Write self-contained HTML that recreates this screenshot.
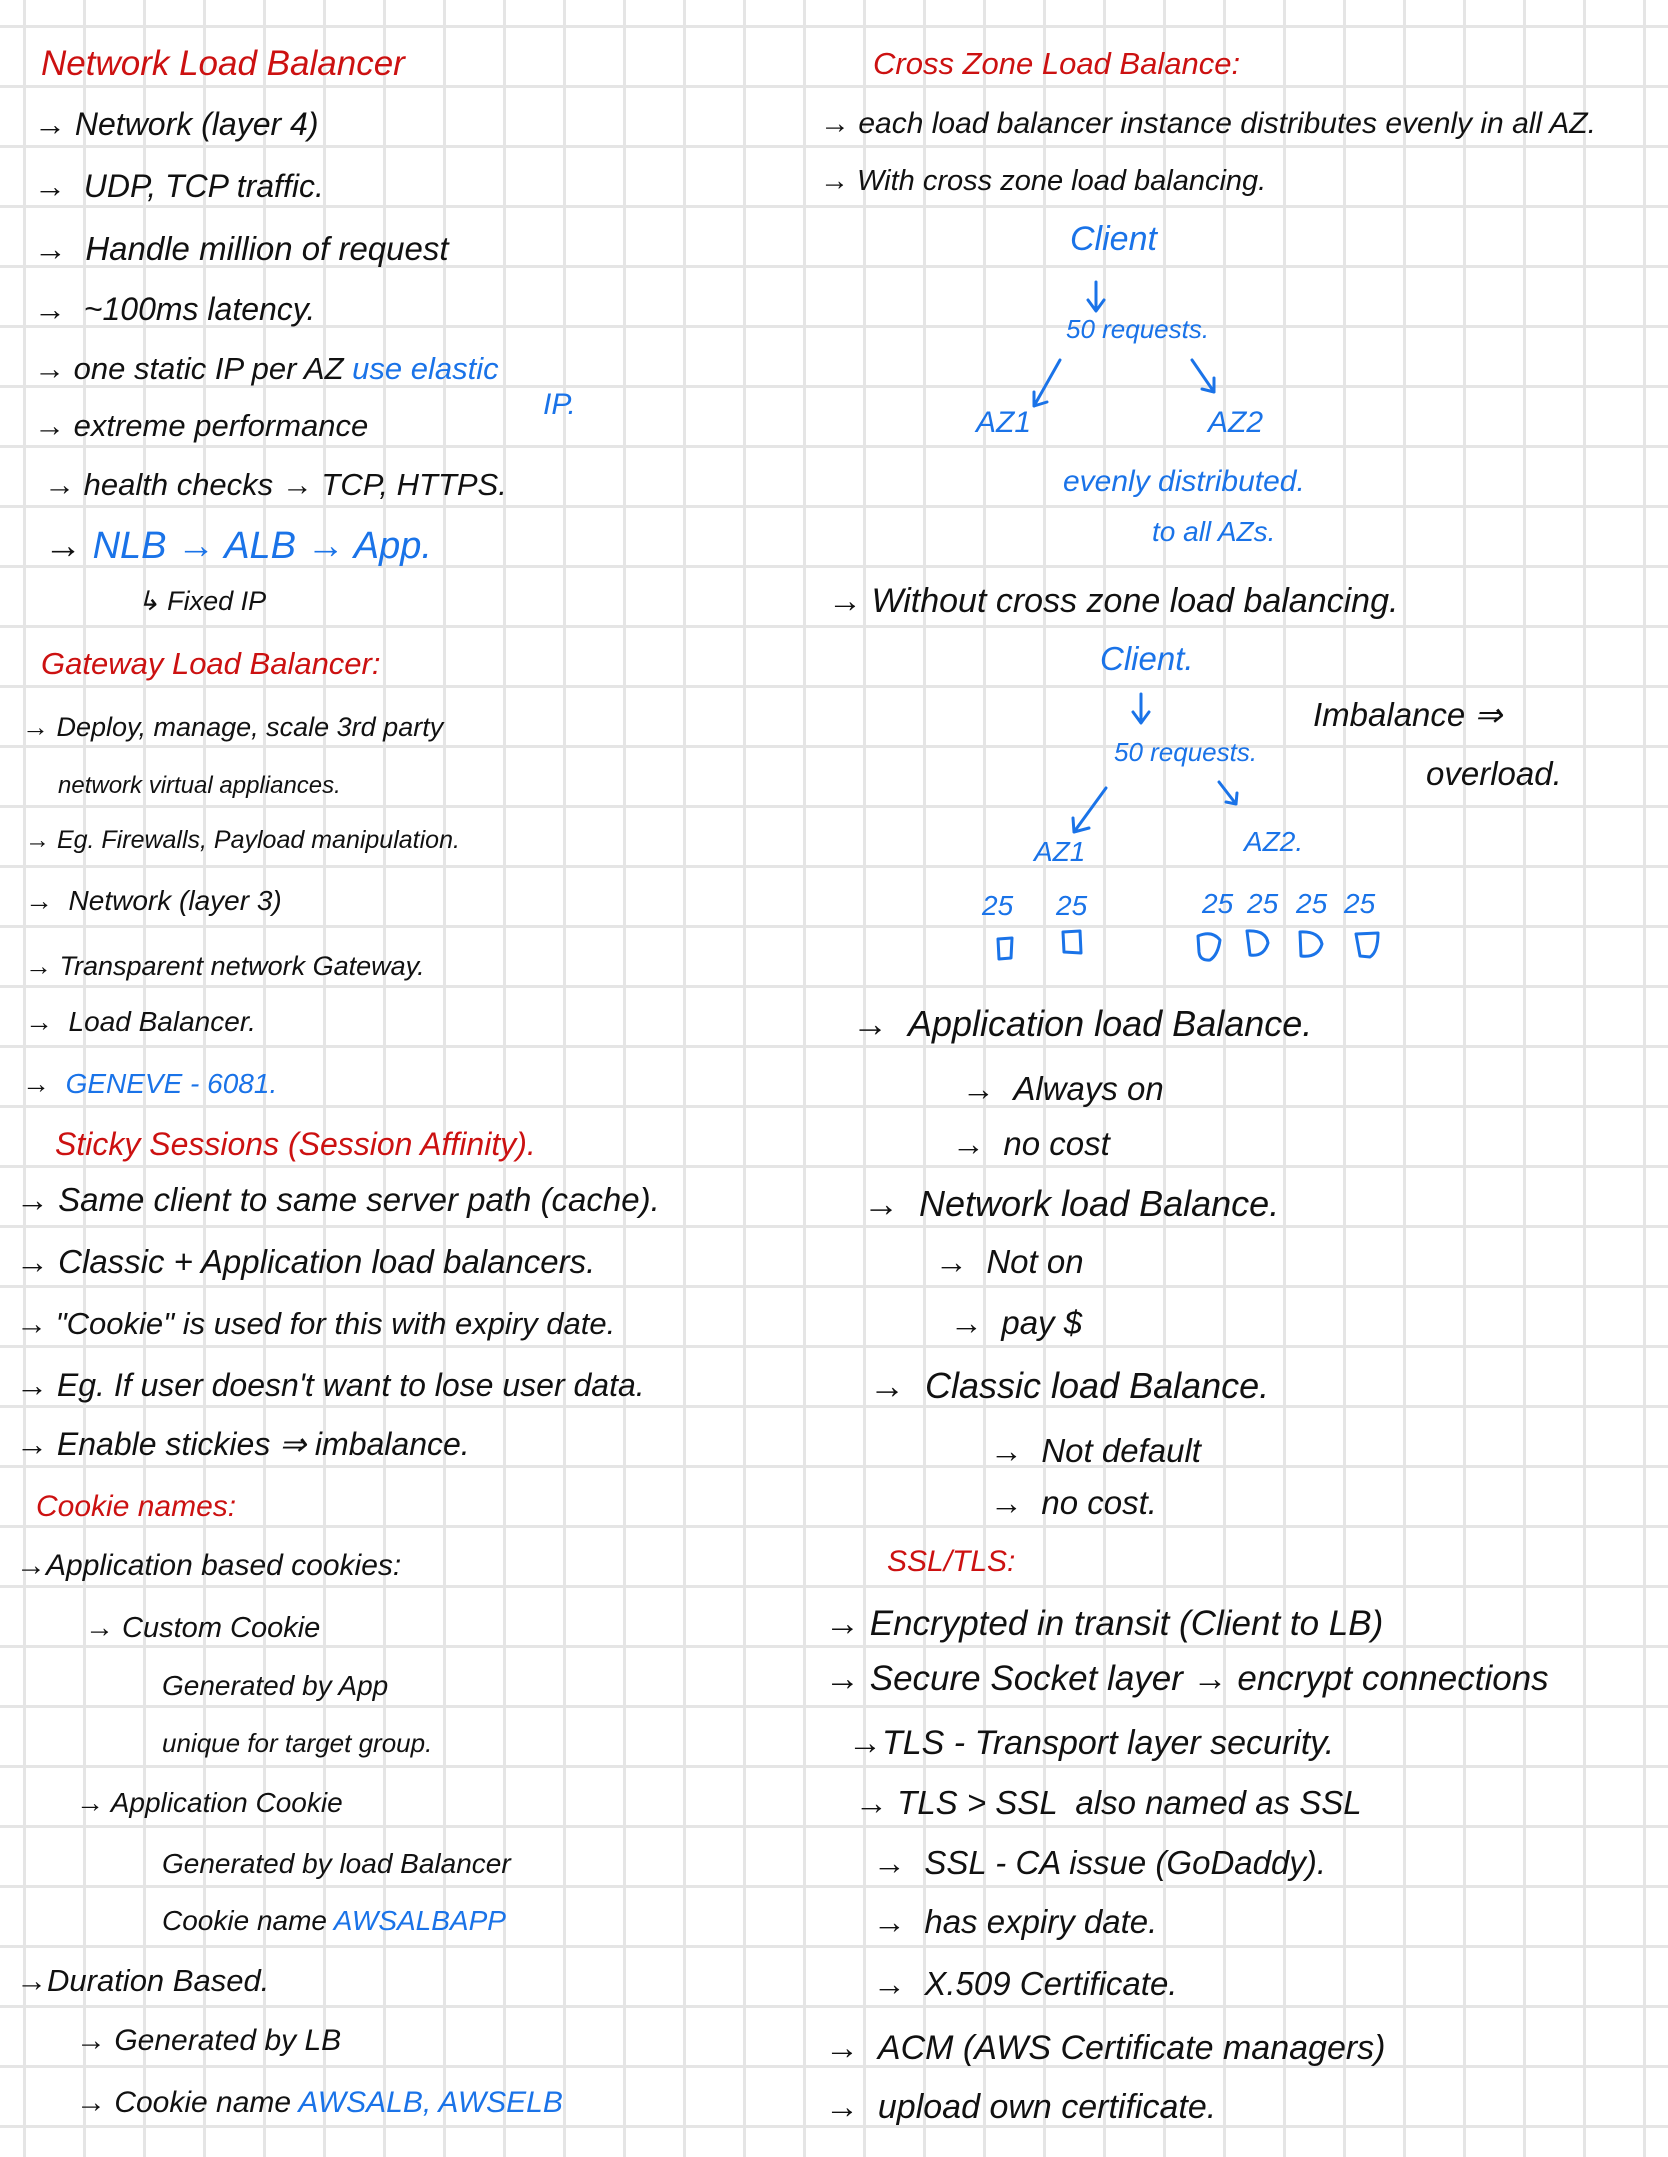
<!DOCTYPE html>
<html><head><meta charset="utf-8"><style>
html,body{margin:0;padding:0}
body{width:1668px;height:2157px;position:relative;overflow:hidden;background:#fff;
background-image:linear-gradient(to right,#e5e5e5 0,#e5e5e5 3px,transparent 3px),linear-gradient(to bottom,#e5e5e5 0,#e5e5e5 3px,transparent 3px);
background-size:60px 60px;background-position:23px 25px;
font-family:"Liberation Sans",sans-serif;color:#111}
.t{position:absolute;white-space:nowrap;line-height:1;font-style:italic}
.r{color:#cc1111}.b{color:#1a73e8}
</style></head><body>
<!-- left column -->
<div class="t r" style="left:41px;top:46px;font-size:35px">Network Load Balancer</div>
<div class="t" style="left:34px;top:108px;font-size:32px">→ Network (layer 4)</div>
<div class="t" style="left:34px;top:170px;font-size:32px">→ &nbsp;UDP, TCP traffic.</div>
<div class="t" style="left:34px;top:232px;font-size:33px">→ &nbsp;Handle million of request</div>
<div class="t" style="left:34px;top:293px;font-size:32px">→ &nbsp;~100ms latency.</div>
<div class="t" style="left:34px;top:353px;font-size:31px">→ one static IP per AZ <span class="b">use elastic</span></div>
<div class="t b" style="left:543px;top:390px;font-size:30px">IP.</div>
<div class="t" style="left:34px;top:410px;font-size:31px">→ extreme performance</div>
<div class="t" style="left:44px;top:469px;font-size:31px">→ health checks → TCP, HTTPS.</div>
<div class="t" style="left:44px;top:527px;font-size:38px">→ <span class="b">NLB → ALB → App.</span></div>
<div class="t" style="left:137px;top:588px;font-size:27px">↳ Fixed IP</div>
<div class="t r" style="left:41px;top:648px;font-size:31px">Gateway Load Balancer:</div>
<div class="t" style="left:22px;top:714px;font-size:27px">→ Deploy, manage, scale 3rd party</div>
<div class="t" style="left:58px;top:774px;font-size:24px">network virtual appliances.</div>
<div class="t" style="left:25px;top:828px;font-size:25px">→ Eg. Firewalls, Payload manipulation.</div>
<div class="t" style="left:25px;top:887px;font-size:28px">→ &nbsp;Network (layer 3)</div>
<div class="t" style="left:25px;top:953px;font-size:27px">→ Transparent network Gateway.</div>
<div class="t" style="left:25px;top:1008px;font-size:28px">→ &nbsp;Load Balancer.</div>
<div class="t" style="left:22px;top:1070px;font-size:28px">→ &nbsp;<span class="b">GENEVE - 6081.</span></div>
<div class="t r" style="left:55px;top:1128px;font-size:32px">Sticky Sessions (Session Affinity).</div>
<div class="t" style="left:16px;top:1183px;font-size:33px">→ Same client to same server path (cache).</div>
<div class="t" style="left:16px;top:1245px;font-size:33px">→ Classic + Application load balancers.</div>
<div class="t" style="left:16px;top:1308px;font-size:31px">→ "Cookie" is used for this with expiry date.</div>
<div class="t" style="left:16px;top:1369px;font-size:32px">→ Eg. If user doesn't want to lose user data.</div>
<div class="t" style="left:16px;top:1428px;font-size:32px">→ Enable stickies ⇒ imbalance.</div>
<div class="t r" style="left:36px;top:1492px;font-size:30px">Cookie names:</div>
<div class="t" style="left:16px;top:1551px;font-size:30px">→Application based cookies:</div>
<div class="t" style="left:85px;top:1614px;font-size:29px">→ Custom Cookie</div>
<div class="t" style="left:162px;top:1672px;font-size:28px">Generated by App</div>
<div class="t" style="left:162px;top:1730px;font-size:26px">unique for target group.</div>
<div class="t" style="left:76px;top:1789px;font-size:28px">→ Application Cookie</div>
<div class="t" style="left:162px;top:1850px;font-size:28px">Generated by load Balancer</div>
<div class="t" style="left:162px;top:1907px;font-size:28px">Cookie name <span class="b">AWSALBAPP</span></div>
<div class="t" style="left:16px;top:1965px;font-size:31px">→Duration Based.</div>
<div class="t" style="left:76px;top:2026px;font-size:30px">→ Generated by LB</div>
<div class="t" style="left:76px;top:2088px;font-size:30px">→ Cookie name <span class="b">AWSALB, AWSELB</span></div>

<!-- right column -->
<div class="t r" style="left:873px;top:48px;font-size:31px">Cross Zone Load Balance:</div>
<div class="t" style="left:820px;top:109px;font-size:30px">→ each load balancer instance distributes evenly in all AZ.</div>
<div class="t" style="left:820px;top:167px;font-size:29px">→ With cross zone load balancing.</div>
<div class="t b" style="left:1070px;top:222px;font-size:34px">Client</div>
<div class="t b" style="left:1066px;top:316px;font-size:26px">50 requests.</div>
<div class="t b" style="left:976px;top:408px;font-size:30px">AZ1</div>
<div class="t b" style="left:1208px;top:408px;font-size:30px">AZ2</div>
<div class="t b" style="left:1063px;top:467px;font-size:30px">evenly distributed.</div>
<div class="t b" style="left:1152px;top:518px;font-size:28px">to all AZs.</div>
<div class="t" style="left:828px;top:584px;font-size:34px">→ Without cross zone load balancing.</div>
<div class="t b" style="left:1100px;top:642px;font-size:33px">Client.</div>
<div class="t" style="left:1313px;top:698px;font-size:33px">Imbalance ⇒</div>
<div class="t" style="left:1426px;top:757px;font-size:33px">overload.</div>
<div class="t b" style="left:1114px;top:739px;font-size:26px">50 requests.</div>
<div class="t b" style="left:1034px;top:838px;font-size:28px">AZ1</div>
<div class="t b" style="left:1244px;top:828px;font-size:28px">AZ2.</div>
<div class="t b" style="left:982px;top:892px;font-size:28px">25</div>
<div class="t b" style="left:1056px;top:892px;font-size:28px">25</div>
<div class="t b" style="left:1202px;top:890px;font-size:28px">25</div>
<div class="t b" style="left:1247px;top:890px;font-size:28px">25</div>
<div class="t b" style="left:1296px;top:890px;font-size:28px">25</div>
<div class="t b" style="left:1344px;top:890px;font-size:28px">25</div>
<svg style="position:absolute;left:0;top:0" width="1668" height="2157" fill="none" stroke="#1a73e8" stroke-width="3" stroke-linecap="round" stroke-linejoin="round">
<path d="M1096 282 L1096 310 M1088 300 L1096 311 L1104 300"/>
<path d="M1060 360 L1034 406 M1034 392 L1034 406 L1047 402"/>
<path d="M1192 360 L1214 392 M1214 378 L1214 392 L1202 389"/>
<path d="M1141 694 L1141 722 M1133 712 L1141 723 L1149 712"/>
<path d="M1106 788 L1074 832 M1073 818 L1074 832 L1089 828"/>
<path d="M1219 782 L1236 804 M1237 793 L1236 804 L1226 802"/>
<path d="M998 939 L1012 938 L1011 958 L999 959 Z"/>
<path d="M1063 932 L1080 931 L1081 953 L1064 952 Z"/>
<path d="M1198 936 Q1212 930 1220 940 Q1218 955 1210 960 Q1200 961 1199 952 Z"/>
<path d="M1247 931 Q1266 930 1268 943 Q1264 957 1250 955 Z"/>
<path d="M1300 932 Q1319 931 1322 944 Q1318 958 1301 956 Z"/>
<path d="M1356 934 L1378 933 Q1378 952 1370 957 L1360 956 Z"/>
</svg>
<div class="t" style="left:852px;top:1006px;font-size:36px">→ &nbsp;Application load Balance.</div>
<div class="t" style="left:962px;top:1072px;font-size:33px">→ &nbsp;Always on</div>
<div class="t" style="left:952px;top:1127px;font-size:33px">→ &nbsp;no cost</div>
<div class="t" style="left:863px;top:1186px;font-size:36px">→ &nbsp;Network load Balance.</div>
<div class="t" style="left:935px;top:1245px;font-size:33px">→ &nbsp;Not on</div>
<div class="t" style="left:950px;top:1306px;font-size:33px">→ &nbsp;pay $</div>
<div class="t" style="left:869px;top:1368px;font-size:36px">→ &nbsp;Classic load Balance.</div>
<div class="t" style="left:990px;top:1434px;font-size:33px">→ &nbsp;Not default</div>
<div class="t" style="left:990px;top:1486px;font-size:33px">→ &nbsp;no cost.</div>
<div class="t r" style="left:887px;top:1547px;font-size:30px">SSL/TLS:</div>
<div class="t" style="left:825px;top:1606px;font-size:35px">→ Encrypted in transit (Client to LB)</div>
<div class="t" style="left:825px;top:1661px;font-size:35px">→ Secure Socket layer → encrypt connections</div>
<div class="t" style="left:848px;top:1726px;font-size:34px">→TLS - Transport layer security.</div>
<div class="t" style="left:855px;top:1786px;font-size:33px">→ TLS &gt; SSL &nbsp;also named as SSL</div>
<div class="t" style="left:873px;top:1846px;font-size:33px">→ &nbsp;SSL - CA issue (GoDaddy).</div>
<div class="t" style="left:873px;top:1905px;font-size:33px">→ &nbsp;has expiry date.</div>
<div class="t" style="left:873px;top:1967px;font-size:33px">→ &nbsp;X.509 Certificate.</div>
<div class="t" style="left:825px;top:2031px;font-size:34px">→ &nbsp;ACM (AWS Certificate managers)</div>
<div class="t" style="left:825px;top:2090px;font-size:34px">→ &nbsp;upload own certificate.</div>
</body></html>
